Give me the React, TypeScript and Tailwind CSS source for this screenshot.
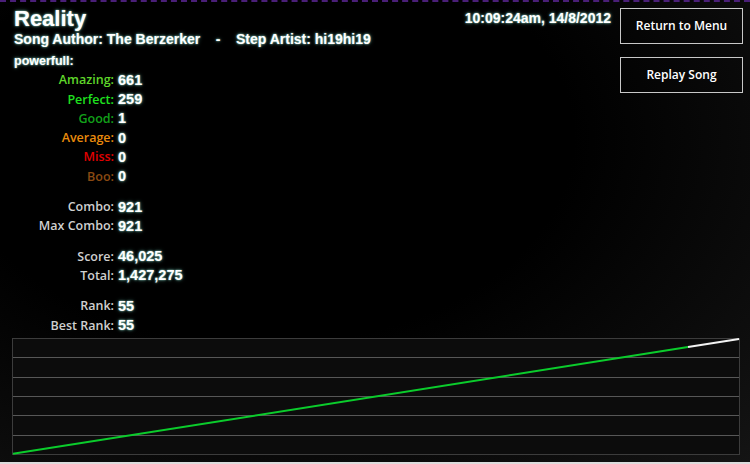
import React from 'react';

type Stat = { label: string; value: string; color: string };

const glow = '[text-shadow:0_0_2px_#9fe8d8,0_0_4px_rgba(120,220,200,0.45)]';

const judgements: Stat[] = [
  { label: 'Amazing:', value: '661', color: 'text-[#5fd62a]' },
  { label: 'Perfect:', value: '259', color: 'text-[#1fe01f]' },
  { label: 'Good:', value: '1', color: 'text-[#12a01a]' },
  { label: 'Average:', value: '0', color: 'text-[#e88a0c]' },
  { label: 'Miss:', value: '0', color: 'text-[#e00000]' },
  { label: 'Boo:', value: '0', color: 'text-[#8a4a12]' },
];

const groups: Stat[][] = [
  judgements,
  [
    { label: 'Combo:', value: '921', color: 'text-[#cfcfcf]' },
    { label: 'Max Combo:', value: '921', color: 'text-[#cfcfcf]' },
  ],
  [
    { label: 'Score:', value: '46,025', color: 'text-[#cfcfcf]' },
    { label: 'Total:', value: '1,427,275', color: 'text-[#cfcfcf]' },
  ],
  [
    { label: 'Rank:', value: '55', color: 'text-[#cfcfcf]' },
    { label: 'Best Rank:', value: '55', color: 'text-[#cfcfcf]' },
  ],
];

const StatRow = ({ stat }: { stat: Stat }) => (
  <div className="flex items-center h-[19.3px]">
    <span
      className={`w-[100px] text-right text-[12.5px] font-semibold font-['Open_Sans',sans-serif] ${stat.color}`}
    >
      {stat.label}
    </span>
    <span className={`ml-[4px] text-[14.5px] font-bold text-white font-['Liberation_Sans',Arial,sans-serif] ${glow}`}>
      {stat.value}
    </span>
  </div>
);

const ScoreGraph = () => {
  const w = 728;
  const h = 117;
  const rows = 6;
  const split = 676;
  const yAt = (x: number) => h - 1 - (x / (w - 1)) * (h - 2);
  return (
    <svg width={w} height={h} viewBox={`0 0 ${w} ${h}`} className="block">
      <rect x={0} y={0} width={w} height={h} fill="#0c0c0c" />
      {Array.from({ length: rows + 1 }).map((_, i) => {
        const y = Math.round((i * (h - 1)) / rows) + 0.5;
        const edge = i === 0 || i === rows;
        return <line key={i} x1={0} x2={w} y1={y} y2={y} stroke={edge ? '#3c3c3c' : '#575757'} strokeWidth={1} />;
      })}
      <line x1={0.5} x2={0.5} y1={0} y2={h} stroke="#3c3c3c" />
      <line x1={w - 0.5} x2={w - 0.5} y1={0} y2={h} stroke="#3c3c3c" />
      <line x1={1} y1={yAt(1)} x2={split} y2={yAt(split)} stroke="#0bcc2c" strokeWidth={2} />
      <line x1={split} y1={yAt(split)} x2={w - 1} y2={yAt(w - 1)} stroke="#f2f2f2" strokeWidth={2} />
    </svg>
  );
};

export default function App() {
  return (
    <div className="w-[750px] h-[464px] flex flex-col overflow-hidden border-b-2 border-[#dcdcdc] bg-[radial-gradient(ellipse_at_35%_30%,#000_45%,#141414_100%)] text-white font-['Liberation_Sans',Arial,sans-serif]">
      {/* window chrome stripe along the top edge */}
      <div className="h-[2px] border-t-2 border-dashed border-[#4a1f78]" />
      <div className="flex">
        <div className="flex-1 pl-[14px] pt-[5px]">
          <div className={`text-[22px] leading-[24px] font-bold ${glow}`}>Reality</div>
          <div className={`text-[14px] leading-[16px] font-bold whitespace-pre ${glow}`}>
            {'Song Author: The Berzerker    -    Step Artist: hi19hi19'}
          </div>
          <div className={`mt-[7px] text-[12.5px] leading-[14px] font-bold ${glow}`}>powerfull:</div>
          <div className="mt-[3px] flex flex-col gap-[11px]">
            {groups.map((g, i) => (
              <div key={i} className="flex flex-col">
                {g.map((s) => (
                  <StatRow key={s.label} stat={s} />
                ))}
              </div>
            ))}
          </div>
        </div>
        <div className={`pt-[8px] mr-[9px] text-[14px] leading-[16px] font-bold ${glow}`}>
          10:09:24am, 14/8/2012
        </div>
        <div className="mt-[6px] mr-[7px] flex flex-col gap-[13px]">
          {['Return to Menu', 'Replay Song'].map((t) => (
            <button
              key={t}
              className="w-[123px] h-[36px] border border-[#c8c8c8] text-[12px] font-semibold text-white font-['Open_Sans',sans-serif]"
            >
              {t}
            </button>
          ))}
        </div>
      </div>
      <div className="mt-auto mb-[7px] ml-[12px]">
        <ScoreGraph />
      </div>
    </div>
  );
}
